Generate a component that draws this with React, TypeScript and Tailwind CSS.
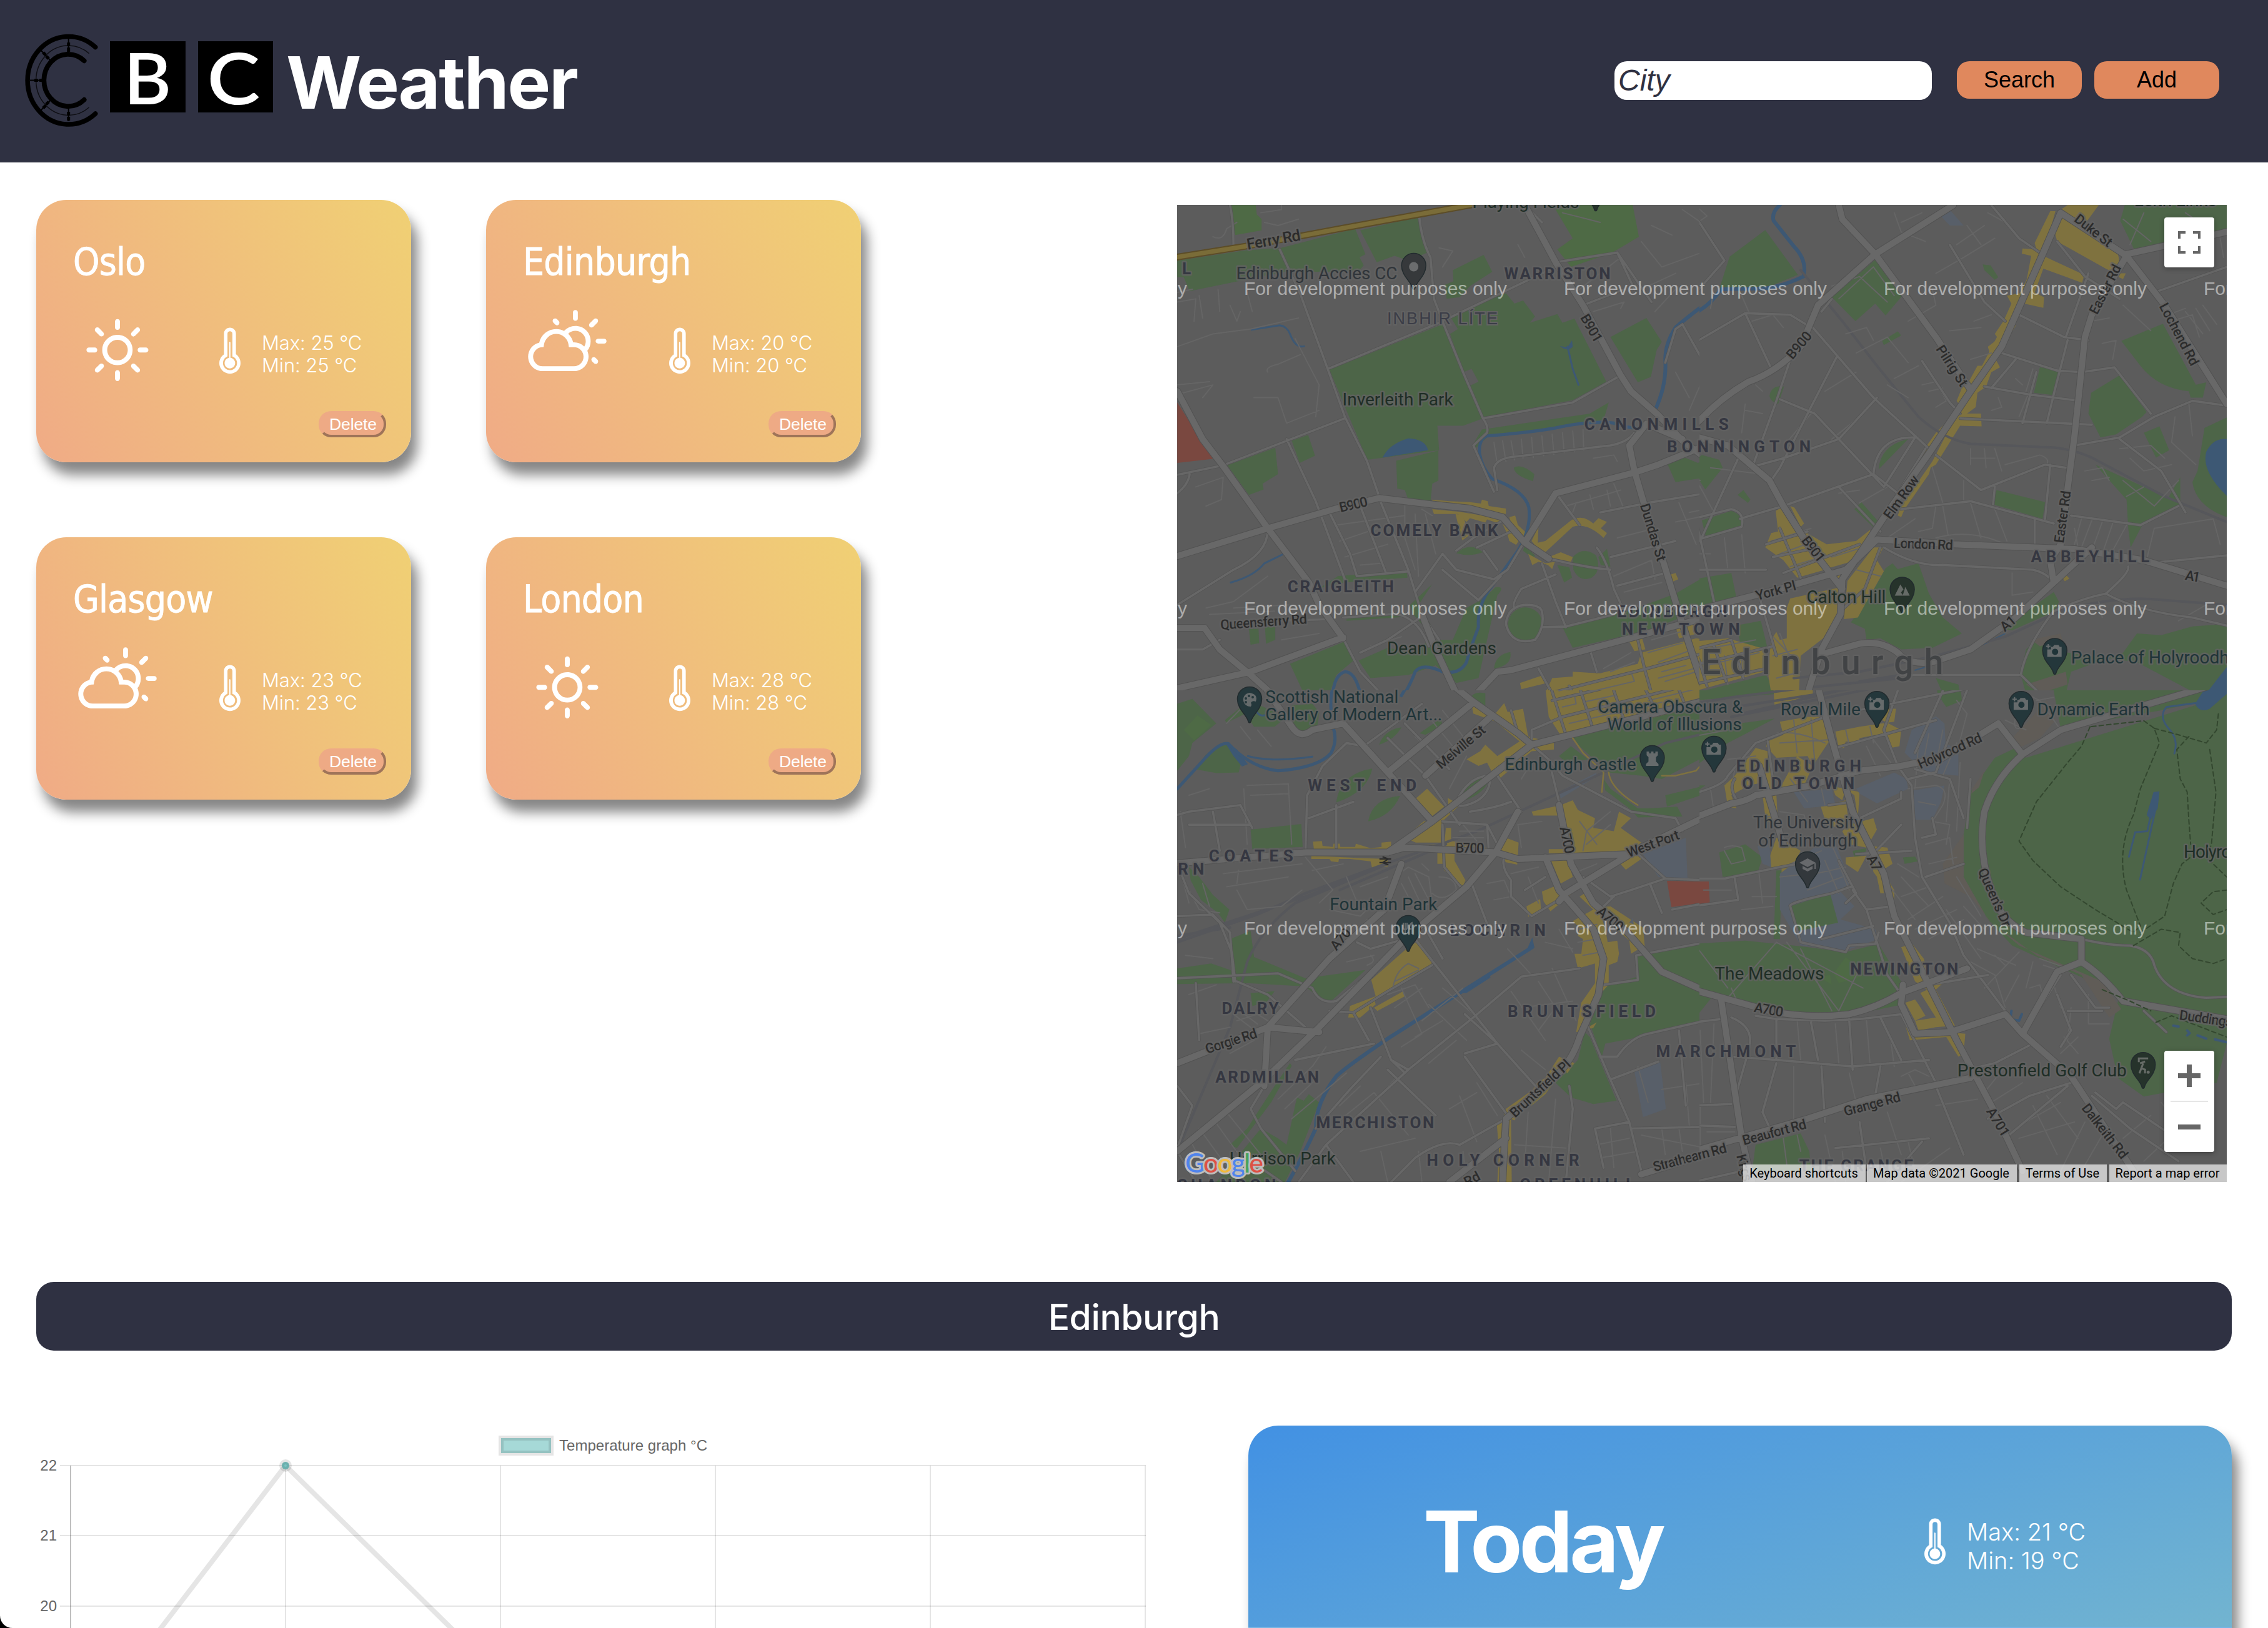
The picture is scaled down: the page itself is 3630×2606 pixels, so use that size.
import React from "react";
import { WiDaySunny, WiDayCloudy, WiThermometer } from "react-icons/wi";

type TileId = "a" | "b" | "c" | "d";

/* The map artwork is split into four tiles, each with its own local units. */
const tiles: Record<TileId, { ox: number; oy: number; sx: number; sy: number }> = {
  a: { ox: 1870, oy: 310, sx: 0.54847, sy: 0.5102 },
  b: { ox: 2710, oy: 310, sx: 0.55485, sy: 0.5102 },
  c: { ox: 1870, oy: 1090, sx: 0.54847, sy: 0.52296 },
  d: { ox: 2710, oy: 1090, sx: 0.55485, sy: 0.52296 },
};
const tileIds: TileId[] = ["a", "b", "c", "d"];
const tileTransform = (t: TileId) =>
  `translate(${tiles[t].ox} ${tiles[t].oy}) scale(${tiles[t].sx} ${tiles[t].sy})`;

const PARK = "#4d6548";
const PITCH = "#4e6a45";
const WATER = "#3d5874";
const SHOP = "#7f723f";
const CLINIC = "#7a4840";
const CAMPUS = "#585f69";
const SAND = "#605c57";

type Area = [string, string];
const areas: Record<TileId, Area[]> = {
  a: [
    [PARK, "M26 210L225 178L330 170L545 110L575 190L558 200L570 225L558 240L500 245L340 245L62 306L45 262L26 262Z"],
    [PARK, "M560 115L732 72L738 130L755 185L700 210L660 195L608 215Z"],
    [PITCH, "M180 36L255 36L258 65L272 80L272 115L195 130Z"],
    [PARK, "M830 240L920 192L945 245L880 290L850 325L812 330L808 285L832 275Z"],
    [PITCH, "M1130 50L1165 36L1355 36L1373 135L1295 185L1175 230L1135 175L1180 140Z"],
    [PARK, "M470 552L800 410L918 705L860 728L785 728L790 805L580 835Z"],
    [PARK, "M822 385L985 312L1010 345L1035 335L1070 385L1055 405L1135 378L1150 405L1185 392L1278 590L1180 648L918 702L875 605L905 590L885 550L860 560L822 440L845 425Z"],
    [PARK, "M1290 450L1395 390L1440 465L1425 490L1408 575L1370 592Z"],
    [PARK, "M915 740L1230 690L1285 655L1270 710L935 760L895 800L890 785Z"],
    [PARK, "M665 838L788 806L788 900L770 910L765 968L700 960L690 930L668 925Z"],
    [PARK, "M360 775L408 757L428 822L383 845Z"],
    [PARK, "M172 852L312 797L320 880L275 910L278 928L235 945Z"],
    [PARK, "M1008 860Q1030 845 1068 880L1064 902Q1010 885 1008 860Z"],
    [PARK, "M840 1128Q880 1090 918 1125Q880 1140 840 1128Z"],
    [PARK, "M440 1238L495 1200L695 1182L698 1205L560 1215L500 1222Z"],
    [PARK, "M1180 1140Q1210 1105 1248 1135Q1265 1185 1235 1205Q1200 1220 1182 1180Z"],
    [PARK, "M1255 1140L1280 1115L1290 1170L1262 1165Z"],
    [PARK, "M1135 1165L1170 1172L1178 1205L1155 1220Z"],
    [PARK, "M1042 1298A50 53 0 1 1 1041 1298Z"],
    [PARK, "M1150 1360L1355 1305L1480 1255L1568 1200L1568 1300L1400 1370L1180 1425Z"],
    [PARK, "M955 1235Q985 1230 960 1260L930 1400L905 1520L840 1535L780 1480L700 1510L590 1520L555 1465L640 1425L720 1440L760 1400L830 1400L870 1300L920 1270Z"],
    [PARK, "M355 1475L515 1405L540 1465L490 1510L470 1568L395 1568Z"],
    [PARK, "M950 1490Q955 1445 998 1438Q1005 1480 950 1490Z"],
    [PARK, "M235 1365L263 1365L265 1410L240 1415Z M282 1360L312 1360L312 1400L285 1412Z"],
    [PARK, "M1455 845L1500 825L1545 845L1568 835L1568 890L1480 905Z"],
    [PARK, "M705 1290L770 1225L730 1290L775 1370L770 1390L715 1320Z"],
    [PARK, "M520 1330L690 1318L690 1328L520 1340Z M1040 1105L1070 1135L1065 1145L1035 1120Z"],
    [CLINIC, "M26 655L130 832L26 845Z"],
    [WATER, "M625 828Q645 785 700 768Q750 770 758 805Z M1143 478L1165 482L1178 460L1180 480Q1165 498 1143 478Z"],
    [SHOP, "M770 960L820 965L880 968L912 972L915 960L932 965L935 980L985 988L985 1005L900 990L770 975Z"],
    [SHOP, "M770 990L850 998L975 1020L965 1035L930 1022L925 1032L880 1018L870 1030L845 1005L775 1005Z"],
    [SHOP, "M838 1005L858 1008L880 1070L858 1088L848 1050Z M975 1035L1022 1090L1015 1102L995 1090L990 1070Z M995 1015L1012 1010L1020 1040L1045 1065L1038 1080L1000 1035Z"],
    [SHOP, "M1080 1045L1060 1090L1075 1110L1100 1125L1180 1045Q1220 1030 1270 1080L1280 1065L1262 1050L1280 1030L1255 1018L1240 1035Q1210 1005 1175 1025L1100 1090L1078 1095Z"],
    [SHOP, "M1050 1130L1100 1160L1128 1155L1120 1178L1108 1165L1080 1155L1062 1165Z M1110 1140L1145 1125L1180 1140L1175 1155Z"],
    [SHOP, "M1465 1195L1480 1190L1488 1210L1470 1218Z M1340 1395L1380 1385L1392 1430L1360 1435Z"],
    [SHOP, "M1380 1440L1540 1395L1568 1400L1568 1568L1100 1568L1120 1520L1180 1515L1180 1500L1260 1505L1370 1475Z M1026 1535L1095 1510L1105 1535L1030 1555Z M1478 1350L1535 1335L1545 1380L1490 1395Z"],
  ],
  b: [
    [PARK, "M105 198L208 114L302 255L200 300L75 300Z"],
    [PARK, "M400 325L525 208L605 318L555 382L525 345L468 400Z"],
    [PARK, "M835 222L858 225L880 262L870 270L840 240Z M545 462L590 432L600 445L550 475Z"],
    [PARK, "M1245 36L1539 36L1539 110L1272 175L1232 85Z"],
    [PARK, "M1235 462L1355 408L1450 600L1480 592L1470 640L1435 640L1430 620Q1340 610 1290 540Z"],
    [PARK, "M1000 545L1055 553L1040 632L983 625Z"],
    [PARK, "M1148 625L1230 570L1308 685L1295 700L1220 755L1175 765L1140 690Z"],
    [PARK, "M1300 750L1345 730L1373 805L1335 828Z"],
    [PARK, "M1539 702L1475 735L1455 870L1440 905Q1450 980 1539 1015Z"],
    [PARK, "M220 635Q225 600 262 605L245 660Q225 655 220 635Z"],
    [PARK, "M535 865Q540 790 620 770Z M865 975L875 930L1015 968L1008 1020Z M465 990L485 968L535 1030L528 1055Z"],
    [PARK, "M1160 850L1240 890L1370 955L1405 890L1405 980L1300 1030L1262 1110L1255 1050L1250 960Z"],
    [PARK, "M0 840L25 820L75 835L85 860L35 928L0 870Z M128 945L145 930L165 960L158 970Z"],
    [PARK, "M25 1025L110 995Q150 1010 135 1050L38 1083Z M0 1210L110 1190L125 1270L0 1310Z"],
    [PARK, "M555 1175L575 1160L590 1178L650 1160L680 1255L720 1330L775 1380L690 1425L600 1430L540 1395L500 1400L495 1365L455 1345L525 1235Z"],
    [PARK, "M1040 1250L1055 1280L1045 1310L920 1370L890 1365Z"],
    [PARK, "M1539 1350L1440 1358L1350 1385L1280 1380L1240 1440L1090 1500L1075 1568L960 1568L945 1510L960 1430L985 1405L1060 1400L1080 1440L1280 1470L1450 1568L1539 1568Z"],
    [PARK, "M125 1355L195 1340L213 1420L140 1432Z M0 1568L210 1510L240 1568Z M700 1520L765 1540L770 1568L720 1568Z"],
    [WATER, "M1539 770Q1500 765 1480 810Q1465 870 1539 948Z M1539 1485L1480 1568L1539 1568Z"],
    [SHOP, "M1040 110L1060 50L1080 36L1170 36L1130 95L1225 190Q1235 220 1215 248L1190 235L1050 150Z"],
    [SHOP, "M1045 55L1030 55L985 155L990 175L950 172L948 188L975 195L955 310L905 320L918 345L895 400L870 440L880 455L850 480L855 500L835 540L820 540L795 590L775 610L760 650L770 665L755 690L700 750L655 820L665 830L780 680L880 470L940 330L1010 190Z"],
    [SHOP, "M1000 190L1128 255L1122 280L1010 235L985 310L1012 325L1010 358L955 345L925 400L930 415L900 470L890 500L870 515L885 545L860 560L845 605L820 625L815 670L790 690L830 690L832 730L770 728L700 850L685 860L680 880L610 990L600 1015L590 1010L600 980L690 840Z"],
    [SHOP, "M238 995L255 985L270 1010L320 1060L385 1100L470 1090L510 1055L515 1080L470 1150L390 1175L440 1210L430 1225L380 1180L300 1205L260 1150L208 1110L225 1065L245 1060Z"],
    [SHOP, "M280 980L292 985L320 1035L310 1045Z M445 1215L520 1110L548 1110L530 1150L550 1185L495 1290L475 1330L435 1335Z"],
    [SHOP, "M280 1270L425 1235L430 1310L400 1350L375 1395L310 1450L305 1568L225 1568L215 1500L225 1400L240 1375L250 1400L270 1395L270 1300Z"],
    [SHOP, "M0 1405L100 1395L210 1430L205 1500L0 1562Z M1225 250L1248 250L1240 268L1228 262Z M1065 1205L1075 1195L1085 1208L1072 1216Z"],
    [SAND, "M975 1400L1060 1380L1065 1400L1000 1420Z M960 1540L1075 1500L1080 1540L1000 1568Z"],
    [CAMPUS, "M705 60L740 50L780 100L740 100Z"],
  ],
  c: [
    [PARK, "M26 70L70 55L140 130L70 190L60 230L26 275Z"],
    [PITCH, "M45 150L85 105L125 135L75 182Z"],
    [PARK, "M110 225L165 190L215 240L205 280L140 282L78 270Z M165 120L235 60L300 90L345 110L310 140L250 140L225 100L170 128Z"],
    [PARK, "M360 75L420 70L440 95L435 140L380 160L365 130Z M350 0L470 0L470 22L400 25Z"],
    [PARK, "M733 160L795 115L800 135L750 165Z M615 195Q630 150 680 142Q660 180 615 195Z M880 55Q890 30 925 38L925 78Z"],
    [PARK, "M240 455L388 438L392 508L245 515Z M490 372Q500 285 595 268Q580 340 490 372Z M583 430Q595 360 676 352Q650 415 583 430Z"],
    [PARK, "M845 372Q860 295 940 285Q930 350 845 372Z"],
    [PARK, "M1180 170L1568 60L1568 230L1440 300L1380 290L1285 280L1200 200Z M1140 230L1175 200L1225 240L1160 250Z"],
    [PARK, "M1270 300L1290 330L1370 390L1400 390L1485 385L1500 415L1370 418L1345 390L1275 335Z M1450 350L1568 320L1568 345L1455 385Z"],
    [PARK, "M60 570L90 600L130 655L178 700L165 740L145 710L95 670L65 610Z"],
    [PARK, "M180 790L240 765L250 845L400 910L575 885L470 985L440 970L400 935L230 925L26 928L26 880L125 865L195 890Z"],
    [PARK, "M240 955L310 950L285 985L245 995Z"],
    [PARK, "M1370 840L1568 800L1568 1040L1350 1095L1275 1110L1265 1150L1230 1050L1275 935L1370 905Z"],
    [PARK, "M1215 1075L1230 1090L1308 1285L1240 1295L1175 1275L1130 1230L1195 1160Z"],
    [PARK, "M375 1275L395 1285L410 1265L440 1290L385 1440L340 1534L140 1534L270 1370L320 1400L345 1420Z M180 1420L230 1370L310 1240L355 1170L360 1178L300 1290L200 1430Z"],
    [WATER, "M165 188L200 210L232 255L215 262L190 230Z M850 955L935 895L940 908L870 955Z M1062 785L1068 815L1045 825Z"],
    [SHOP, "M1026 10L1100 0L1568 0L1568 70L1425 110L1150 175L1110 110L1100 20L1035 25Z"],
    [SHOP, "M885 75L950 105L980 68L990 95L1035 85L1050 170L1125 190L1125 210L1060 215L965 300L955 270L945 280L930 250L905 260L870 240L910 215L925 195L960 230L1025 185L955 125L890 100Z"],
    [SHOP, "M722 360L755 330L805 385L765 418Z M815 358L850 380L800 430L795 455L795 495L722 495L690 480L745 430L790 425L820 400Z"],
    [SHOP, "M422 492L448 490L450 505L480 508L482 498L500 498L502 508L545 508L547 498L590 512L622 508L622 495L650 492L650 520L425 518Z M417 535L560 542L640 545L640 568L595 575L590 552L530 545L498 545L496 555L475 552L470 545L417 545Z"],
    [SHOP, "M810 450L825 450L825 490L860 495L945 515L940 525L835 522L835 550L867 610L860 628L805 580L803 560L785 560L785 518L700 515L705 505L805 500Z"],
    [SHOP, "M960 520L985 480L1022 495L1020 535L1018 562L985 555Z M1060 400L1145 380L1180 365L1195 395L1245 420L1240 450L1300 460L1315 400L1350 420L1320 450L1380 495L1340 525L1110 528L1110 515L1175 515L1145 412L1065 412Z"],
    [SHOP, "M1115 545L1165 545L1180 600L1145 620Z M1090 645L1135 625L1140 650L1215 610L1235 602L1115 705L1095 675Z M1045 690L1085 668L1088 705L1050 722Z M1315 555L1375 530L1380 545L1335 578Z"],
    [SHOP, "M1200 660L1215 650L1245 695L1290 690L1385 755L1390 810L1350 835L1345 795L1262 715L1275 760L1282 800L1310 795L1315 835L1310 860L1285 870L1285 930L1245 975L1225 1060L1250 1045L1240 1062L1190 1075L1205 985L1245 925L1245 865L1195 880L1185 835L1205 835L1210 790L1195 780L1200 755L1180 735L1240 700Z"],
    [SHOP, "M592 915L700 815L730 795L775 858L735 895L600 970L605 990L560 1030L525 1030L530 995L605 965Z M600 1000L685 950L690 965L610 1010Z"],
    [SHOP, "M1140 1150L1185 1170L1165 1200L1150 1195L1100 1265L1060 1300L1050 1290L1010 1345L1000 1340L1002 1534L960 1534L965 1440L958 1350L975 1345L985 1310L1065 1250L1070 1235L1100 1215Z"],
    [CLINIC, "M1455 612L1568 614L1568 682L1520 685L1468 692Z"],
    [CAMPUS, "M1385 530L1510 480L1515 605L1430 600Z M1360 1195L1435 1165L1452 1310L1385 1335Z M1140 340L1250 280L1245 295L1145 360Z M1345 740L1355 725L1358 745Z"],
  ],
  d: [
    [PARK, "M0 30L225 0L235 40L0 60Z M0 150L235 115L100 190L0 265Z M700 0L770 5L775 60L730 80L705 40Z"],
    [PARK, "M1060 0L1539 0L1539 100L1480 60L1350 90L1060 145L1040 30Z"],
    [PARK, "M870 235L930 205L960 235L1539 45L1539 1110L1510 1230L1300 1272L1225 1215L1200 1095L1230 960L920 810L850 730L780 600L780 470L800 340Z"],
    [PARK, "M0 320L35 320L0 345Z M75 525L150 500L200 540L185 590L85 600Z M605 540L640 538L648 552L610 560Z M240 580L255 580L250 790L232 790Z M460 520L500 512L495 530L465 540Z"],
    [PARK, "M0 805L150 795L310 812L440 830L535 805L605 930L605 990L400 1035L290 1030L60 960L0 1040Z"],
    [PITCH, "M405 895L440 845L470 870L485 905L420 925Z M360 905L395 900L400 930Z"],
    [PARK, "M180 1420L310 1385L335 1440L340 1500L170 1500Z"],
    [SAND, "M930 210L1000 175L1045 120L1020 60L960 130L915 180Z M780 470L720 560L725 620L800 660L860 740L990 840L1120 900L1200 1030L1235 1005L1180 920L940 810L850 730L780 600Z M805 330L840 275L825 325L802 345Z"],
    [WATER, "M1539 0L1490 0L1448 70Q1460 100 1490 85L1539 40Z M1328 340L1345 338L1340 390L1320 425L1308 410Z"],
    [CLINIC, "M0 614L45 614L48 682L0 684Z"],
    [SHOP, "M215 185L260 165L250 125L330 110L380 110L395 180L345 260L330 230L240 235L210 200Z M410 155L480 140L580 125L585 85L560 85L545 120L600 150L595 200L570 205L550 160L480 175L478 190L440 185L435 205L420 205Z"],
    [SHOP, "M0 0L110 0L90 15L0 25Z M230 0L345 0L345 40L330 45L235 80Z M90 320L120 290L180 205L215 215L215 280L250 300L160 320L110 350L125 390L100 385Z M300 230L345 260L320 320L250 330L260 310Z"],
    [SHOP, "M225 240L240 350L245 440L210 430L200 350L190 240Z M368 385L440 365L450 440L420 450L385 440Z M400 320L415 325L480 340L475 420L465 350L440 330L430 365L410 350Z"],
    [SHOP, "M250 480L310 520L290 560L225 575L220 540L240 480Z M255 575L320 560L310 590L255 590Z M430 460L450 440L520 420L530 455L500 510L450 500Z M440 540L500 535L475 585L440 560Z M505 505L560 510L575 560L545 580L580 640L580 670L520 585Z"],
    [SHOP, "M530 600L545 610L550 650L540 650Z M600 815L632 805L665 850L685 925L720 925L700 945L755 1055L700 1060L650 1070L640 1040L700 1030L655 955L675 945L640 920Z M612 985L640 975L650 990L670 1025L640 1040Z M608 1040L640 1090L735 1075L785 1080L780 1140L765 1150L730 1090L625 1100Z"],
    [CAMPUS, "M610 220L630 150L700 108L725 130L728 190L765 215L765 290L670 280Z M470 330L580 280L615 300L620 330L530 375L480 345Z M635 335L725 320L715 370L690 425L640 425Z"],
    [CAMPUS, "M250 590L400 470L455 620L420 640L465 690L425 730L525 760L535 790L440 825L310 810L250 700Z M185 505L220 500L225 570L200 560Z M290 340L400 330L410 380L320 390Z"],
    [PARK, "M280 690L395 650L418 740L305 765Z"],
    [SHOP, "M240 500L300 525L295 555L250 570Z"],
  ],
};

const rivers: Record<TileId, [number, string][]> = {
  a: [
    [3, "M243 427L325 413Q345 415 355 440Q370 485 396 479"],
    [6, "M1568 345Q1500 400 1480 420Q1450 470 1450 520Q1455 600 1420 680"],
    [5, "M1390 735Q1350 740 1300 720Q1240 710 1130 735Q1050 750 930 760Q905 770 908 815Q915 860 945 895Q1040 930 1052 985Q1060 1050 1020 1120Q960 1210 935 1245Q900 1300 905 1360Q880 1430 870 1470Q850 1510 800 1500Q740 1470 720 1500Q710 1530 690 1568"],
    [5, "M560 1568Q545 1500 515 1500Q485 1510 480 1568"],
    [3, "M1165 480L1180 550L1197 600"],
    [3, "M182 1220Q250 1200 280 1160L337 1130"],
  ],
  b: [
    [6, "M250 36Q225 60 232 85L290 165Q330 210 318 260Q240 300 180 298L80 300Q50 350 0 378"],
    [2, "M640 1495Q760 1460 900 1380"],
  ],
  c: [
    [5, "M26 330L100 245Q150 185 175 192Q240 265 320 275Q440 265 475 220Q495 180 480 140"],
    [3, "M232 230Q300 250 420 232"],
    [5, "M490 0Q470 30 475 90M705 0L680 45M555 0L562 22"],
    [6, "M1062 815L850 955L640 1095Q520 1180 490 1210Q430 1290 430 1370Q400 1440 350 1534"],
    [3, "M255 90Q265 110 280 105"],
  ],
  d: [
    [3, "M1448 68L1365 80Q1340 110 1375 150Q1400 180 1388 222"],
    [3, "M1318 420L1310 460L1275 463L1257 538M1332 400L1289 608"],
    [4, "M918 1010L915 1035L940 1040L948 1020M1385 1055L1400 1058M1425 1070L1432 1078L1425 1085M1455 1085L1480 1095M1505 1097L1539 1106"],
  ],
};

const major: Record<TileId, string> = {
  a: "M1040 36L1130 215L1210 350L1320 570L1350 620L1430 695L1500 775L1568 830M26 1137L290 1050L500 985L615 955L770 975L880 988L975 1015L1040 1095L1110 1145M26 620L100 770L160 855L290 1050L410 1220L440 1290L510 1395M1040 1095L1130 940L1360 875L1430 850L1568 790M1500 770L1395 722L1345 790L1360 870L1390 980L1440 1140L1500 1350L1540 1480L1568 1568M26 1362L105 1362M105 1362L150 1430L240 1510L300 1568M26 1552L240 1500L510 1392M740 1320L780 1430L840 1568M1000 1495L1380 1385L1568 1330M1000 1495L960 1500L900 1568",
  b: "M420 36L430 80L525 190L700 450L800 615M525 190L360 350L310 480Q240 560 160 590Q80 640 20 710L0 730M525 190L750 36M1060 60L1010 185L890 480L800 620L680 815L560 1000L480 1130L430 1210L425 1320L370 1430L330 1568M1060 60L1250 195L1150 380L1130 450L1100 760L1060 1090M1250 195L1360 350L1539 660M1250 190L1539 120M0 760L100 790L220 900L260 980L330 1100L430 1240M0 1310L250 1240L440 1180L530 1085L750 1100L1100 1115L1300 1150L1539 1230M1060 1100L1030 1150L1040 1220L930 1330L800 1430L690 1470Q620 1480 590 1440Q540 1400 480 1412L370 1445M1040 1220L1150 1110",
  c: "M26 15L60 0M270 0L360 140Q385 180 420 150L510 130L640 280L770 430M640 280L885 70M815 0L885 60L1020 160L1060 195M750 290L940 110M770 430L640 525L400 525M770 430L1060 195L1568 60M0 560L400 525M640 525L690 510L955 525L1020 545L1340 530L1568 415M1100 540L1140 640L1240 760L1270 850L1255 960L1200 1090Q1180 1160 1130 1210L985 1340L975 1534M1020 400L955 525L870 630L690 790L440 1060L270 1230L26 1440M1140 380L1175 560L1240 680L1340 770L1440 890L1568 950M1340 535L1160 650L1140 675M680 560L630 700L470 850L290 1060L280 1240M26 1170L290 1060L440 1075M820 1534L985 1400M1380 1510L1568 1450",
  d: "M0 420L110 375Q150 370 180 350L340 320L480 275L590 262L720 235L880 130L950 225Q870 300 840 400Q820 520 860 640Q880 730 960 770L1120 790L1120 860L1050 890L950 1080L900 1020L740 1075L640 1080L600 990L605 930M950 225L1060 150L1539 0M355 0L400 180L460 400L550 590L580 720L680 930L760 1100L870 1320L950 1500M0 945L220 1010Q330 1035 450 1020Q530 1000 600 955L790 880M1120 860Q1180 900 1240 980L1539 1035M950 1080L1090 1210L1270 1500M0 1440L330 1340L500 1280L800 1215M80 970L140 1400L170 1534M190 260L260 500",
};

const minor: Record<TileId, string> = {
  a: "M325 175L385 315L465 550L515 700L580 840L615 950M732 72Q740 150 765 200L775 330L800 400L860 560L918 705Q935 730 930 750L890 790L950 935M465 550L780 410L1120 235M918 705L1180 655L1320 570M180 36Q190 90 190 160M345 770L430 965L515 1210M26 882L160 852L515 705M615 955L700 1180L740 1320L790 1400M470 1000L530 1130L550 1200L700 1185M560 980L635 1190M510 1395L560 1500L620 1568M1135 945L1200 1040M1110 1145Q1200 1170 1290 1180M1040 1090L990 1180L950 1210L840 1180L800 1130L720 1250M800 1180L905 1275L970 1200M1090 1160L1130 1280L1160 1360M1130 1195L1030 1240Q1000 1290 1010 1300M1095 1360L1160 1358L1300 1320M1250 1110Q1280 1150 1300 1240L1330 1310M1090 1310Q1100 1360 1070 1400Q1000 1420 985 1350Q990 1295 1042 1290Q1085 1290 1090 1310M26 1290L190 1180Q290 1130 290 1055M26 940Q60 910 62 880M510 1330L640 1320Q720 1310 760 1420M320 1340L470 1335L510 1395M960 930L950 860Q960 830 1010 825L1290 790Q1340 780 1360 750M1290 1140L1480 1090M1310 1230L1450 1190M1260 1000L1400 970L1568 940M1450 530L1480 425L1500 410M1500 410L1568 540M1310 185L1410 340M1210 350L1330 300M1090 90L1040 36M1130 215L1310 185L1360 300M900 1110L1000 1060M840 1120L890 1080L985 1020M960 1180L920 1120M1080 1490L1120 1568M1230 1430L1250 1500M26 1430L100 1430L150 1400M560 1440L640 1400L735 1330M1110 1568L1390 1492L1568 1440M1370 1400L1390 1492L1410 1568M1180 1568L1170 1545",
  b: "M0 60L90 210L0 320M860 36L940 140L1000 185M1050 150L1130 260L1230 330M940 380L1070 450L1140 460M890 500L1050 555L1120 560L1215 545L1320 690M840 605L970 630L1100 648M770 705L1150 725M700 820L830 930L1015 850L1075 860M0 470L150 375L280 380L340 420M345 420L520 640L680 800M150 375L230 560M415 510L250 860L225 900M250 645L350 690L550 920L640 765Q530 760 520 880L260 980M530 640L420 770L260 830L160 860M280 520L240 650L170 860M130 830L20 1090M520 880L590 940L670 800M600 990L800 965L1040 1035M870 920L865 975M420 920L540 1060M1030 850L1015 1020M1100 790L1230 765L1330 700L1440 650L1539 665M1090 1010L1290 1040L1400 980M1080 460L1040 630L1020 720M1140 250L1075 450M930 520L860 610M950 720L990 560M985 1020L985 1110M550 1110Q640 1170 720 1165L980 1180Q1020 1190 1040 1220M0 1090L30 1080L140 1045Q150 1000 110 990L0 1020M260 980L135 1020M210 1100L330 1060M230 1140L360 1110M260 1190L480 1100M310 1205L250 1050M1255 1170Q1260 1190 1190 1255Q1120 1270 1040 1310Q960 1420 945 1510L1000 1568M1190 1255Q1280 1310 1440 1330L1539 1355M1310 1160L1539 1135M1330 310L1539 230M660 525L740 655L770 690M740 160L840 340L900 400M400 330L370 370M1230 770L1350 870L1420 1000M600 1510L940 1510M0 980L60 1280M0 1180L210 1180M425 1310L495 1240L540 1110M190 1260L240 1450M0 1430L110 1400M0 1480L230 1420M0 1540L210 1490M60 1420L95 1530M110 1400L145 1520M10 1440L40 1545",
  c: "M400 525L405 350L450 260L520 190L570 200M26 410L60 400L210 380M210 380L245 450M130 400L150 520M60 440L240 440M490 380L490 510M410 420L540 370M640 175L750 290L850 440M570 200L740 70M690 130L820 270M800 430L930 440L960 500M800 440L805 570L860 640M930 440L935 520M880 400Q950 390 1000 370M1060 195L1110 240L1140 370M960 290L1030 400M1110 240L1150 290L1350 400L1480 420L1500 460M885 620L940 770M980 540Q970 570 1000 610L1000 660L1060 720L1140 670M870 380Q830 390 845 360Q880 290 940 290Q940 360 870 380M1210 600L1290 660L1350 640L1450 605L1568 610M1350 510L1450 605M1405 620L1440 710M1250 710L1300 660M26 910L320 895L420 940Q440 990 490 980L650 840M80 925L90 1100M195 920L185 830L150 740M26 720L130 715L180 770L190 920M200 920L290 960L400 1060M720 790L960 1110L1080 1250M770 870L640 950L540 1015L470 1010M540 1015L585 1100M590 1000L650 1160L690 1200M740 740L800 850M690 790L590 820L550 800M890 1030L700 1190L460 1420L380 1534M1270 930L1370 915L1365 840L1568 800M960 1110L865 1020M1200 880L1030 905L890 1030M865 1150L990 1330M960 1110L865 1140M1260 1150L1310 1150Q1350 1090 1400 1080L1568 1040M1225 1060L1290 1220L1345 1350L1380 1500M1290 1220L1430 1165M1350 1370L1568 1365M1245 1370L1345 1350M1245 1370L1270 1490M1170 1240L1180 1310L1160 1534M985 1340L850 1420Q800 1400 720 1460L650 1534M620 1150L530 1250L430 1370M640 1190L780 1330M460 1420L540 1534M700 1190L650 1160M270 1370L240 1310L280 1240M270 1370L370 1500M200 1440L330 1534M26 1440L80 1534M26 1240L70 1300L26 1430M370 1160L600 1110M26 560L60 650L160 750M1100 600L1040 640M1470 700L1568 680M1490 1070L1510 1300M1110 0L1160 165M1060 195L1060 150L1150 110L1568 0M1200 20L1240 150M1290 0L1330 120M1380 0L1430 105M1480 0L1510 80M1120 60L1380 -5M1020 160L1000 90",
  d: "M0 345Q90 320 100 290L180 190L380 110L900 0M410 205L700 120M600 0L550 150L590 260L630 320L640 480L660 600L740 740L780 840L900 1010M620 300L700 280L800 0M480 420L600 360L600 340M470 530L630 520M500 550L600 440M460 640L500 700L560 900L600 960M420 550L470 650L440 680M0 605L90 605L250 570L300 560M120 605L130 670L0 690M500 700L570 690M280 690Q270 680 400 650L455 630M280 690L310 800L440 830L450 810L525 805L535 770M370 790L520 750M850 900L680 930M700 1230L600 1020M600 1020L480 1035L380 1040L240 1035L180 1025M240 1035L240 1160M340 1045L360 1160M450 1035L460 1190M540 1030L600 1160M110 1030Q180 1060 160 1130L120 1280M110 1150L240 1160L460 1180L680 1160M0 1360L120 1365M0 1045L80 1035M370 1180L380 1350M240 1170L200 1320L230 1390M540 1180L520 1300M700 1240L780 1450M850 1340L970 1270L1090 1230M900 1400L1080 1240M1150 1270L1260 1370L1400 1470M1160 1260L1220 1310L1240 1290L1380 1390M980 1110L870 1170L790 1190M1120 790Q1200 810 1260 810Q1320 820 1330 870Q1360 960 1480 970L1539 967M1300 1010L1365 1075M1060 900L1000 1000M1090 900L1160 1000L1200 1000M1080 1010L1180 1010M1050 960L1090 1070L1060 1120M800 300L790 450M720 30L640 220M660 480L700 470L690 420M640 270L740 300L780 420M670 600L780 560M0 1300L110 1295M560 1534L660 1410M410 1430L680 1400M480 1350L500 1500M0 1534L140 1500M215 185L230 300M120 300Q100 330 130 370M390 380L460 370",
};

const lanes: Record<TileId, string> = {
  a: "M26 310L70 300M26 340L80 330L75 400M90 320L100 390M145 300L150 370M180 350L200 400L210 370M230 310L245 370M26 480L130 440L240 425L380 390M290 560Q280 545 320 535L385 505M26 630L130 600L100 640M26 600L120 590M370 455L440 600L430 700M250 640L320 640L345 720L440 680M130 135Q160 150 170 110L200 90M270 60L330 50L330 36M280 90L320 100L380 80M1380 150L1440 230L1568 180M1410 100L1470 130M1500 50L1568 100M1240 370L1330 340L1320 360M1380 300L1480 250M1420 370L1480 300M950 780L960 850M975 775L985 840M1000 775L1010 835M1030 770L1035 830M1060 765L1065 828M1090 760L1095 822M1120 755L1125 818M1150 750L1155 812M1180 745L1185 810M1210 740L1212 805M1240 830L1300 820L1310 840M1160 980L1320 930M1180 1000L1190 970M1240 990L1230 945M1290 980L1280 930M1300 910L1330 990M720 1005L730 1200M750 1005L780 1130M690 980L690 1080L720 1180M490 1040L690 1010M500 1090L610 1050M515 1140L640 1100M560 1165L620 1160M80 920L160 890L155 960L110 980M190 1300L350 1290M110 1300L190 1280L290 1200M120 1320L310 1310M330 1400L440 1380M590 1420L680 1390M740 990L770 1010M1300 1200L1410 1150L1420 1210M1330 1250L1440 1220M1310 1080L1420 1050M1490 970L1540 1100M1520 1000L1568 990M1480 1030L1568 1010M1410 1400L1510 1370M1400 1440L1500 1410M1430 1470L1530 1430L1540 1500L1450 1530M1270 1490L1350 1440M1290 1500L1360 1470M1520 680L1568 560M1480 560L1520 640M1150 60L1260 90M790 170L830 180L800 230M1020 160L1040 200M1200 300L1320 200M1200 1540L1350 1500L1360 1530L1210 1568M1440 1500L1510 1480M1430 1520L1568 1480",
  b: "M0 100L40 70L10 40M60 300L50 360M140 320L160 370M170 400L230 380L260 420M180 600L200 620M150 680L200 690M400 290L480 260L560 340M420 330L520 230L580 320M440 440L500 420L520 460M470 500L560 450L620 530M580 580L650 540M560 600L620 640M380 620L470 560M660 600L700 590L730 650L700 670M680 620L720 610M620 400L700 350L690 300M580 60L600 120L670 150M600 90L660 60M760 160L840 100M780 200L870 140M700 250L780 200M810 400L860 380M790 100L830 160M850 60L900 90M740 430L830 420M800 520L860 500M960 620L980 550M940 700L970 620M880 640L890 670L860 680M930 580L950 600M1180 470L1220 460L1210 520M1150 400L1200 390M1240 350L1320 430M1370 380L1420 360M1380 400L1440 380L1460 450M1420 370L1470 440M1450 360L1490 430M1470 350L1510 410M800 830L870 830M800 800L800 850M840 800L845 860M870 800L890 870M900 850L1000 820Q1030 830 1020 850M690 860L720 970M780 900L780 965M700 980L690 1050L650 1060M720 980L735 1070M800 970L830 1080M870 990L905 1090M700 1080Q800 1050 900 1100M1100 1050L1110 1110M1120 1020L1100 1100M1150 1025L1120 1110M1180 1030L1150 1120M1210 1035L1180 1130M1250 1040L1200 1140M1130 870L1180 860L1200 900M1150 900L1200 890M1230 800L1320 790L1360 830M1260 830L1300 870L1380 850M1240 900L1330 980L1400 900M1250 950L1300 920M1330 1050L1500 1020L1520 1100M1310 1140L1330 1050M1390 700L1380 780L1450 850M1430 660L1440 760M920 1190L920 1260L980 1250M1180 1330L1170 1280M1080 1290L1180 1290M1400 1340L1480 1290M1490 130L1500 220M1520 140L1530 200M1470 170L1480 230M0 890L20 900M50 860L200 880M10 900L60 1000M150 660L140 750M340 690L270 780M480 700L400 770M420 940L480 930M480 970L560 920M560 1080L640 1020M0 1130L50 1130M90 1080L100 1180M140 1070L150 1190M240 1520L310 1500M30 1430L180 1400M40 1480L190 1440M140 1520L140 1440M90 1450L100 1540M1240 80L1320 150M1300 60L1260 160M1420 60L1500 120M225 1090L340 1050M250 1130L350 1090M280 1170L370 1140M400 1140L490 1110M470 1180L540 1200M230 1390L300 1470M250 1380L280 1460M230 1450L300 1430",
  c: "M35 400L50 510M60 350L120 330M220 330L230 500M230 320L350 315L360 500M240 350L350 345M150 540L340 520M60 550L150 545M160 590L390 560M170 630L350 600M200 640L230 700L330 690L390 640M200 620L205 580M400 540L480 640L440 680M420 580L510 560M520 600L560 700L620 690M660 600L700 570L760 600L770 680L710 700M680 620L720 700M700 600L740 690M720 590L760 670M560 630L640 600M740 560L760 580M790 600Q840 600 840 640Q800 680 770 650M860 440L900 490M850 460L920 460M830 480L920 480M1060 250L1030 300M870 230L820 330M760 110L830 200M720 170L790 240M800 90L860 170M930 620L980 610L1000 660L950 670M1000 590L1080 570M1050 600L1080 680M1090 430L1020 440L1030 510M1180 590L1250 560M1210 520L1220 460L1290 400M1250 500L1200 430M1220 500L1290 440M470 700L560 720L590 690M510 820L580 730M520 860L600 840M590 840Q610 860 580 870M50 620L90 700L150 710M40 600L60 680M100 620L120 690M50 840L130 850M60 960L140 930M90 1080L180 1060M190 1020L240 1060M200 1040L260 1020L320 1060M210 1010L260 1050M180 1140L250 1100M640 960L720 930L760 1000M660 1000L740 940M680 940L740 1080L680 1120M800 940L890 1020M760 990L870 1100M840 1100L760 1170M740 1040L860 940M720 1090L800 1040M1080 920L1130 1000L1080 1070M1000 950L1100 1100M1030 1000L1180 980M1120 880L1190 1040M990 820L1060 900M1100 800L1180 820M1140 760L1180 830M1100 1190L1030 1130M850 1270L900 1410M900 1230L960 1330M820 1310L900 1260M470 1370L600 1260L700 1390M500 1300L560 1240M610 1280L660 1220M560 1440L720 1400M620 1440L640 1534M730 1440L740 1534M860 1440L870 1534M1050 1320L1040 1480M1130 1280L1110 1534M1010 1420L1160 1430M1250 1420L1345 1400M1260 1460L1370 1440M1290 1370L1300 1490M1370 1180L1400 1290M1440 1250L1568 1230M1510 1230L1520 1360M1380 1390L1568 1430M1440 1370L1450 1450M1490 1370L1500 1440M60 1400L130 1534M90 1370L180 1500M130 1340L240 1500M170 1320L270 1450M320 1280L420 1180L460 1120M340 1310L430 1220M360 1340L520 1200M170 130L235 60M210 140L240 180M260 150L300 200M1140 30L1280 -5M1150 80L1190 70L1185 45M1210 65L1300 45M1220 90L1400 45M1170 130L1440 65M1310 20L1420 -5M1400 60L1560 20M1450 80L1568 50M655 945Q660 890 700 865L730 880M660 920L730 885M1200 760L1250 745M1195 800L1250 790M1210 840L1260 830",
  d: "M0 170L100 150M100 240L180 230M120 270L110 330M50 330L60 400M190 420L240 410M250 400L320 410L330 450M370 330L380 380M280 300L330 370M500 200L540 290M520 180L570 250M620 330L700 320Q740 330 720 380L690 430M650 190L640 330M680 160L660 270M720 150L700 260M760 190L720 290M770 250L760 460M740 300L730 430M690 430L740 440L730 500M650 370L700 380M670 500L740 480L750 560M680 560L760 540M600 600L680 690M560 620L640 730M590 560L650 600M600 660L680 630M620 730L720 660M640 760L760 700M680 790L780 730M730 700L830 850M760 600L830 720M780 690L840 760M800 860L870 900L900 1000M820 820L930 870M840 940L940 830M900 980L940 900M870 840L900 870M980 860L960 940M1000 850L1080 880M1010 870L1070 890M970 940L1000 930L1010 970L980 1020M1040 930L1060 1000M1090 1000L1080 1100M1140 960L1140 1050L1200 1050M1070 1090L1110 1140M1060 1140L1110 1090M90 510Q110 500 140 510L150 550L110 560L90 520M280 560L370 520M310 600L440 570M330 640L430 600M380 550L420 650M420 560L450 640M250 600L340 590M390 480L450 620M400 470L370 500M190 590L200 680M170 660L240 660M140 700L230 690M30 640L110 640M240 800L490 940M310 820L400 1010M240 800L100 970M270 800L420 1010M110 940L130 990M480 880L420 1010M0 800L100 940M20 1070L30 1290M60 1050L50 1290M300 1040L310 1160M410 1050L420 1170M500 1040L510 1170M570 1100L580 1180M290 1180L290 1340M450 1200L470 1290M600 1210L640 1190L680 1210M620 1200L640 1240M20 1300L20 1430M40 1380L120 1380M260 1400L270 1480M300 1390L310 1440M380 1390L410 1534M560 1320L600 1450M430 1440L440 1534M540 1430L560 1534M620 1410L640 1500M740 1430L600 1534M700 1300L820 1280M840 1260L900 1180M860 1290L950 1230M980 1300L1050 1450M1020 1270L1110 1400M960 1350L1060 1290M940 1400L1100 1350M1130 1350L1060 1500M1180 1390L1120 1500M1320 1330L1240 1400M1380 1390L1300 1470M1350 1290L1420 1390M900 120L960 150M930 110Q920 160 950 140M990 60L1040 50M960 40L1000 60L1060 150M760 60L790 100L770 180M240 160Q300 150 380 190M250 190L390 180M290 120L300 220M340 115L350 240M440 150L450 195M510 140L520 190",
};

const rails: Record<TileId, string> = {
  a: "",
  b: "M310 240L430 400L530 540L650 700Q720 770 800 785L1000 795Q1100 795 1170 840L1360 950L1539 1030M290 1520L480 1500L700 1450L900 1390L1060 1310Q1200 1265 1320 1272L1539 1290M480 1530L600 1510M330 1550L600 1520",
  c: "M26 800L260 715L400 650L620 565L900 460L1250 290L1450 190L1568 160M26 790L400 660L640 560M26 1440L180 1060L230 860Q270 760 370 680L640 560M26 780L180 755M500 640L810 500",
  d: "M0 70L110 50L480 0M110 110L530 20M140 100L500 10M120 80L600 0",
};

const trails =
  "M1145 140L1120 200L1080 250L990 370L940 490L980 550L1060 630L1160 700L1270 770L1290 750L1250 640Q1220 520 1270 410L1290 330L1345 190L1330 145L1300 122L1145 140M1330 145L1400 165L1480 190L1510 150L1515 100M1430 170L1395 210L1405 300L1425 340L1430 430L1435 500M1490 210L1508 340L1495 500L1480 540L1539 600M1290 770L1360 720L1385 620L1410 560L1440 535M1539 640L1500 645L1465 680L1500 715L1539 700M1270 810L1350 760L1405 770L1400 810L1440 850L1500 865L1539 850M1180 945L1260 980L1320 1010M1335 1045L1380 1025L1539 1090";

interface LabelProps {
  t: TileId;
  x: number;
  y: number;
  w: number;
  size?: number;
  kind?: "area" | "poi" | "park" | "road" | "uni" | "city";
  angle?: number;
  children: string;
}

const labelInk = {
  area: "#353741",
  poi: "#1f3438",
  park: "#1f2e26",
  road: "#2c2c2c",
  uni: "#30353a",
  city: "#414345",
};

/* Straight labels start at (x, y); rotated ones are centred on it. w is in pixels on screen. */
function Label({ t, x, y, w, size = 26, kind = "area", angle, children }: LabelProps) {
  const k = tiles[t];
  const px = k.ox + x * k.sx;
  const py = k.oy + y * k.sy;
  const rotated = angle !== undefined;
  return (
    <text
      x={rotated ? px - w / 2 : px}
      y={rotated ? py + size * 0.35 : py}
      transform={rotated ? `rotate(${angle} ${px} ${py})` : undefined}
      textLength={w}
      fontSize={size}
      fontWeight={kind === "area" ? 700 : kind === "road" || kind === "city" ? 500 : 400}
      fill={labelInk[kind]}
      stroke="#626262"
      strokeWidth={5}
      strokeLinejoin="round"
      strokeOpacity={0.8}
      paintOrder="stroke"
    >
      {children}
    </text>
  );
}

function Pin({ t, x, y, fill, children }: { t: TileId; x: number; y: number; fill: string; children?: React.ReactNode }) {
  const k = tiles[t];
  return (
    <g transform={`translate(${k.ox + x * k.sx} ${k.oy + y * k.sy})`}>
      <path
        d="M0 0C-1 0 -2 -1 -2.4 -3C-5 -13 -19.5 -22 -19.5 -38A19.5 19.5 0 0 1 19.5 -38C19.5 -22 5 -13 2.4 -3C2 -1 1 0 0 0Z"
        fill={fill}
        stroke="#222b2e"
        strokeWidth={1.5}
      />
      {children}
    </g>
  );
}

function CameraGlyph() {
  return (
    <g transform="translate(0 -37)">
      <path d="M-6 -7H-3L-1 -10H6L8 -7H11V9H-12V-3H-6Z" fill="#666b6c" />
      <circle cx="0.5" cy="1" r="5" fill="#1f3438" />
      <path d="M-14 -8H-7M-10.5 -11.5V-4.500" stroke="#666b6c" strokeWidth="2" />
    </g>
  );
}

function MapArtwork() {
  return (
    <svg viewBox="1884 328 1680 1564" className="block h-full w-full" style={{ fontFamily: "Roboto, sans-serif" }}>
      <rect x="1884" y="328" width="1680" height="1564" fill="#5c5c5c" />
      <defs>
        <clipPath id="clip-a"><rect x="1884" y="328" width="836" height="777" /></clipPath>
        <clipPath id="clip-b"><rect x="2720" y="328" width="844" height="777" /></clipPath>
        <clipPath id="clip-c"><rect x="1884" y="1105" width="836" height="787" /></clipPath>
        <clipPath id="clip-d"><rect x="2720" y="1105" width="844" height="787" /></clipPath>
      </defs>
      {tileIds.map((t) => (
        <g key={t} clipPath={`url(#clip-${t})`}>
          <g transform={tileTransform(t)} fill="none" strokeLinejoin="round" strokeLinecap="round">
            {areas[t].map(([color, d], i) => (
              <path key={i} d={d} fill={color} />
            ))}
            {rivers[t].map(([w, d], i) => (
              <path key={i} d={d} stroke={WATER} strokeWidth={w} vectorEffect="non-scaling-stroke" />
            ))}
            <path d={rails[t]} stroke="#56575b" strokeWidth={4} vectorEffect="non-scaling-stroke" />
            <path d={lanes[t]} stroke="#656565" strokeWidth={2} vectorEffect="non-scaling-stroke" />
            <path d={minor[t]} stroke="#545454" strokeWidth={5} vectorEffect="non-scaling-stroke" />
            <path d={minor[t]} stroke="#676767" strokeWidth={3.6} vectorEffect="non-scaling-stroke" />
            <path d={major[t]} stroke="#525252" strokeWidth={12} vectorEffect="non-scaling-stroke" />
            <path d={major[t]} stroke="#686868" strokeWidth={10} vectorEffect="non-scaling-stroke" />
            {t === "a" && (
              <>
                <path d="M20 200L225 165L500 110L890 34" stroke="#5c4d28" strokeWidth={11} vectorEffect="non-scaling-stroke" />
                <path d="M20 200L225 165L500 110L890 34" stroke="#7a6c38" strokeWidth={7} vectorEffect="non-scaling-stroke" />
              </>
            )}
            {t === "c" && (
              <path d="M1180 175L1210 220L1270 280L1265 340M1285 280Q1290 330 1370 380M1440 290L1480 290L1540 275L1568 240" stroke={SHOP} strokeWidth={2.500} vectorEffect="non-scaling-stroke" />
            )}
            {t === "d" && (
              <path d={trails} stroke="#33472f" strokeWidth={2} strokeDasharray="7 5" vectorEffect="non-scaling-stroke" />
            )}
          </g>
        </g>
      ))}

      <Label t="a" x={887} y={46} w={171} size={28} kind="park">Playing Fields</Label>
      <Label t="b" x={1272} y={39} w={132} size={28} kind="park">Leith Links</Label>
      <Label t="a" x={307} y={144} w={87} size={25} kind="road" angle={-10}>Ferry Rd</Label>
      <Label t="a" x={40} y={252} w={15} size={26}>L</Label>
      <Label t="a" x={198} y={268} w={258} size={28} kind="uni">Edinburgh Accies CC</Label>
      <Label t="a" x={980} y={268} w={170}>WARRISTON</Label>
      <text x={1870 + 638 * 0.54847} y={310 + 409 * 0.5102} textLength={177} fontSize={27} fill="#3b3d47" stroke="#626262" strokeWidth={4} paintOrder="stroke" style={{ fontFamily: "'Liberation Sans', sans-serif" }}>
        INBHIR LÍTE
      </text>
      <Label t="a" x={1235} y={422} w={48} size={22} kind="road" angle={60}>B901</Label>
      <Label t="a" x={508} y={665} w={177} size={28} kind="park">Inverleith Park</Label>
      <Label t="a" x={1214} y={741} w={231}>CANONMILLS</Label>
      <Label t="a" x={1455} y={811} w={230}>BONNINGTON</Label>
      <Label t="a" x={540} y={975} w={46} size={22} kind="road" angle={-13}>B900</Label>
      <Label t="a" x={590} y={1075} w={204}>COMELY BANK</Label>
      <Label t="a" x={1415} y={1062} w={95} size={22} kind="road" angle={73}>Dundas St</Label>
      <Label t="a" x={348} y={1251} w={170}>CRAIGLEITH</Label>
      <Label t="a" x={278} y={1343} w={139} size={22} kind="road" angle={-4}>Queensferry Rd</Label>
      <Label t="a" x={638} y={1444} w={175} size={28} kind="park">Dean Gardens</Label>
      <Label t="a" x={1310} y={1328} w={176}>EDINBURGH</Label>
      <Label t="a" x={1323} y={1383} w={189}>NEW TOWN</Label>

      <Label t="b" x={1155} y={115} w={70} size={22} kind="road" angle={38}>Duke St</Label>
      <Label t="b" x={1188} y={300} w={86} size={22} kind="road" angle={-63}>Easter Rd</Label>
      <Label t="b" x={305} y={475} w={50} size={22} kind="road" angle={-50}>B900</Label>
      <Label t="b" x={747} y={540} w={74} size={22} kind="road" angle={57}>Pilrig St</Label>
      <Label t="b" x={1402} y={441} w={110} size={22} kind="road" angle={62}>Lochend Rd</Label>
      <Label t="b" x={600} y={952} w={80} size={22} kind="road" angle={-54}>Elm Row</Label>
      <Label t="b" x={1065} y={1014} w={84} size={22} kind="road" angle={-82}>Easter Rd</Label>
      <Label t="b" x={664} y={1099} w={95} size={22} kind="road" angle={2}>London Rd</Label>
      <Label t="b" x={347} y={1115} w={46} size={22} kind="road" angle={52}>B901</Label>
      <Label t="b" x={974} y={1157} w={190}>ABBEYHILL</Label>
      <Label t="b" x={1441} y={1200} w={24} size={22} kind="road" angle={10}>A1</Label>
      <Label t="b" x={238} y={1245} w={66} size={22} kind="road" angle={-15}>York Pl</Label>
      <Label t="b" x={327} y={1284} w={127} size={28} kind="park">Calton Hill</Label>
      <Label t="b" x={908} y={1348} w={26} size={22} kind="road" angle={-40}>A1</Label>
      <Label t="b" x={1090} y={1473} w={253} size={28} kind="poi">Palace of Holyroodh</Label>

      <Label t="c" x={283} y={66} w={213} size={28} kind="poi">Scottish National</Label>
      <Label t="c" x={283} y={120} w={283} size={28} kind="poi">Gallery of Modern Art...</Label>
      <Label t="c" x={1253} y={98} w={232} size={28} kind="poi">Camera Obscura &amp;</Label>
      <Label t="c" x={1281} y={152} w={215} size={28} kind="poi">World of Illusions</Label>
      <Label t="c" x={853} y={202} w={95} size={22} kind="road" angle={-40}>Melville St</Label>
      <Label t="c" x={982} y={273} w={210} size={28} kind="poi">Edinburgh Castle</Label>
      <Label t="c" x={407} y={337} w={174}>WEST END</Label>
      <Label t="c" x={118} y={553} w={135}>COATES</Label>
      <Label t="c" x={28} y={592} w={42}>RN</Label>
      <Label t="c" x={880} y={511} w={46} size={22} kind="road" angle={1}>B700</Label>
      <Label t="c" x={1164} y={487} w={44} size={22} kind="road" angle={78}>A700</Label>
      <Label t="c" x={1414} y={498} w={88} size={22} kind="road" angle={-20}>West Port</Label>
      <Label t="c" x={471} y={702} w={172} size={28} kind="poi">Fountain Park</Label>
      <Label t="c" x={1290} y={728} w={48} size={22} kind="road" angle={40}>A700</Label>
      <Label t="c" x={502} y={790} w={38} size={22} kind="road" angle={-50}>A70</Label>
      <Label t="c" x={822} y={780} w={153}>LOCHRIN</Label>
      <Label t="c" x={156} y={1019} w={91}>DALRY</Label>
      <Label t="c" x={990} y={1028} w={237}>BRUNTSFIELD</Label>
      <Label t="c" x={183} y={1102} w={86} size={22} kind="road" angle={-18}>Gorgie Rd</Label>
      <Label t="c" x={137} y={1229} w={166}>ARDMILLAN</Label>
      <Label t="c" x={1085} y={1247} w={124} size={22} kind="road" angle={-43}>Bruntsfield Pl</Label>
      <Label t="c" x={431} y={1370} w={189}>MERCHISTON</Label>
      <Label t="c" x={178} y={1480} w={170} size={28} kind="park">Harrison Park</Label>
      <Label t="c" x={754} y={1484} w={244}>HOLY CORNER</Label>
      <Label t="c" x={1025} y={1558} w={184}>GREENHILL</Label>
      <Label t="c" x={26} y={1560} w={158}>SHANDON</Label>
      <Label t="c" x={886} y={1524} w={26} size={22} kind="road" angle={-28}>Rd</Label>
      <Label t="c" x={1423} y={1151} w={224}>MARCHMONT</Label>

      <Label t="d" x={252} y={106} w={128} size={28} kind="poi">Royal Mile</Label>
      <Label t="d" x={992} y={106} w={180} size={28} kind="poi">Dynamic Earth</Label>
      <Label t="d" x={740} y={214} w={110} size={22} kind="road" angle={-24}>Holyrood Rd</Label>
      <Label t="d" x={124} y={278} w={200}>EDINBURGH</Label>
      <Label t="d" x={141} y={331} w={180}>OLD TOWN</Label>
      <Label t="d" x={173} y={452} w={175} size={28} kind="uni">The University</Label>
      <Label t="d" x={188} y={506} w={158} size={28} kind="uni">of Edinburgh</Label>
      <Label t="d" x={1415} y={541} w={76} size={28} kind="park">Holyro</Label>
      <Label t="d" x={523} y={557} w={26} size={22} kind="road" angle={62}>A7</Label>
      <Label t="d" x={870} y={662} w={100} size={22} kind="road" angle={66}>Queen's Dr</Label>
      <Label t="d" x={62} y={914} w={175} size={28} kind="park">The Meadows</Label>
      <Label t="d" x={453} y={899} w={173}>NEWINGTON</Label>
      <Label t="d" x={218} y={1006} w={47} size={22} kind="road" angle={10}>A700</Label>
      <Label t="d" x={1485} y={1034} w={92} size={22} kind="road" angle={8}>Duddingst</Label>
      <Label t="d" x={762} y={1211} w={271} size={28} kind="park">Prestonfield Golf Club</Label>
      <Label t="d" x={516} y={1295} w={93} size={22} kind="road" angle={-15}>Grange Rd</Label>
      <Label t="d" x={234} y={1381} w={105} size={22} kind="road" angle={-15}>Beaufort Rd</Label>
      <Label t="d" x={-10} y={1458} w={121} size={22} kind="road" angle={-15}>Strathearn Rd</Label>
      <Label t="d" x={880} y={1350} w={50} size={22} kind="road" angle={58}>A701</Label>
      <Label t="d" x={1188} y={1378} w={105} size={22} kind="road" angle={52}>Dalkeith Rd</Label>
      <Label t="d" x={148} y={1490} w={44} size={22} kind="road" angle={75}>King's</Label>
      <Label t="d" x={306} y={1502} w={182}>THE GRANGE</Label>
      <Label t="b" x={24} y={1508} w={387} size={55} kind="city">Edinburgh</Label>

      <path d="M616 545H650M616 556H650M625 538L642 545L625 556L642 563" transform={tileTransform("c")} fill="none" stroke="#2c2c2c" strokeWidth={4} />

      <Pin t="a" x={1247} y={54} fill="#26332b" />
      <Pin t="a" x={716} y={300} fill="#36393b"><circle cx="0" cy="-36" r="7.500" fill="#6b6d6e" /></Pin>
      <Pin t="b" x={603} y={1316} fill="#26332b"><path d="M-12 -28L-3 -46L2 -38L5 -42L12 -28Z" fill="#666b67" /><path d="M-2 -33L5 -42L1 -29Z" fill="#26332b" /></Pin>
      <Pin t="b" x={1043} y={1508} fill="#24373b"><CameraGlyph /></Pin>
      <Pin t="d" x={530} y={142} fill="#24373b"><CameraGlyph /></Pin>
      <Pin t="d" x={946} y={142} fill="#24373b"><CameraGlyph /></Pin>
      <Pin t="d" x={60} y={279} fill="#24373b"><CameraGlyph /></Pin>
      <Pin t="c" x={237} y={128} fill="#24373b">
        <path d="M0 -48A11 11 0 1 0 2 -26Q4 -29 2 -32Q4 -36 10 -34Q14 -46 0 -48Z" fill="#666b6c" />
        <g fill="#24373b"><circle cx="-6" cy="-39" r="2" /><circle cx="-1" cy="-43" r="2" /><circle cx="5" cy="-41" r="2" /><circle cx="-6" cy="-33" r="2" /></g>
      </Pin>
      <Pin t="c" x={1412} y={308} fill="#24373b">
        <path d="M-9 -48H-5V-45H-2V-48H2V-45H5V-48H9V-42L6 -39V-32L10 -28V-25H-10V-28L-6 -32V-39L-9 -42Z" fill="#666b6c" />
      </Pin>
      <Pin t="c" x={700} y={828} fill="#24373b">
        <path d="M-8 -46V-38A3 3 0 0 0 -2 -38V-46M-5 -46V-28M6 -28V-46Q2 -44 2 -36H6" stroke="#666b6c" strokeWidth="2" fill="none" />
      </Pin>
      <Pin t="d" x={330} y={633} fill="#33383c">
        <path d="M0 -47L13 -40L0 -33L-13 -40ZM-8 -35L0 -30.500L8 -35V-30L0 -26L-8 -30ZM11 -39H13V-30H11Z" fill="#67696c" />
      </Pin>
      <Pin t="d" x={1298} y={1247} fill="#26332b">
        <path d="M-7 -42V-48H8M-5 -40L3 -43M0 -40L-3 -32L3 -30V-24M-3 -32L-6 -24" stroke="#666b67" strokeWidth="3" fill="none" />
        <circle cx="8" cy="-26" r="2.500" fill="#666b67" />
      </Pin>

      <g style={{ fontFamily: "'Liberation Sans', sans-serif" }} fontSize={30} fill="#ffffff" fillOpacity={0.5}>
        {[472, 984, 1496].map((y) =>
          [1479, 1991, 2503, 3015, 3527].map((x) => (
            <text key={`${x}-${y}`} x={x} y={y} textLength={421}>
              For development purposes only
            </text>
          )),
        )}
      </g>

      <text x={1897} y={1877} textLength={125} fontSize={43} strokeWidth={6} stroke="#bdbdbd" strokeLinejoin="round" paintOrder="stroke" fontWeight={500} style={{ fontFamily: "Lato, sans-serif" }}>
        <tspan fill="#5084ec">G</tspan>
        <tspan fill="#dd5145">o</tspan>
        <tspan fill="#f0b93a">o</tspan>
        <tspan fill="#5084ec">g</tspan>
        <tspan fill="#46a35c">l</tspan>
        <tspan fill="#dd5145">e</tspan>
      </text>
    </svg>
  );
}

function WeatherMap() {
  return (
    <div className="relative mt-[68px] ml-auto h-[1564px] w-[1680px] overflow-hidden">
      <MapArtwork />
      <button className="absolute top-5 right-5 flex h-20 w-20 items-center justify-center rounded bg-white shadow-[0_2px_8px_rgba(0,0,0,0.3)]">
        <svg viewBox="0 0 36 36" className="h-9 w-9" fill="none" stroke="#666666" strokeWidth="4">
          <path d="M2 12V2H12M24 2H34V12M34 24V34H24M12 34H2V24" />
        </svg>
      </button>
      <div className="absolute right-5 bottom-12 flex h-[162px] w-20 flex-col items-center rounded bg-white shadow-[0_2px_8px_rgba(0,0,0,0.3)]">
        <svg viewBox="0 0 36 36" className="my-[22px] h-9 w-9" stroke="#666666" strokeWidth="8">
          <path d="M0 18H36M18 0V36" />
        </svg>
        <div className="h-[2px] w-[60px] bg-[#e6e6e6]" />
        <svg viewBox="0 0 36 36" className="my-[22px] h-9 w-9" stroke="#666666" strokeWidth="8">
          <path d="M0 18H36" />
        </svg>
      </div>
      <div className="absolute right-0 bottom-0 flex h-7 items-center font-[Roboto,sans-serif] text-[20px] leading-7 whitespace-nowrap text-black">
        <span className="w-[196px] bg-[#f5f5f5]/70 pr-[2px] text-center">Keyboard shortcuts</span>
        <span className="ml-[2px] w-[240px] bg-[#f5f5f5]/70 pr-[2px] text-center">Map data ©2021 Google</span>
        <span className="ml-1 w-[140px] bg-[#f5f5f5]/70 pr-[2px] text-center">Terms of Use</span>
        <span className="ml-1 w-[188px] bg-[#f5f5f5]/70 pr-[2px] text-center">Report a map error</span>
      </div>
    </div>
  );
}

function Logo() {
  return (
    <div className="flex h-full items-start">
      <svg viewBox="0 0 120 152" className="mt-[52px] ml-[38px] h-[152px] w-[120px]" fill="none" stroke="#000000">
        <path d="M114.700 23.500A65.700 70.300 0 1 0 114.700 130" strokeWidth="7.500" strokeLinecap="round" />
        <path d="M96.700 45.300A38.700 41.700 0 1 0 96.700 107.700" strokeWidth="7.700" strokeLinecap="round" />
        <path d="M104.700 33.700A52 55.700 0 1 0 104.700 119.700" strokeWidth="1.500" opacity="0.7" />
        <path d="M71.700 10V34M71.700 118V142M10 76.500H32M27 28L43 45M27 125L43 108" strokeWidth="2" />
        <path d="M71.700 16V22M71.700 24V31M71.700 127V133M71.700 135V141M17 76.500H23M25 76.500H31M31 32L35 36M36 38L40 42M31 121L35 117M36 115L40 111" strokeWidth="5" />
      </svg>
      <div className="mt-[66px] ml-[18px] flex h-[114px] w-[121px] items-center justify-center bg-black font-[Lato,sans-serif] text-[114px] leading-none font-semibold text-white">
        <span className="scale-x-102">B</span>
      </div>
      <div className="mt-[66px] ml-5 flex h-[114px] w-[120px] items-center justify-center bg-black font-[Lato,sans-serif] text-[114px] leading-none font-semibold text-white">
        <span className="-ml-[6px] scale-x-112">C</span>
      </div>
      <h1 className="mt-[62px] ml-[21px] font-[Inter,sans-serif] text-[116px] leading-[140px] font-bold tracking-[-2.6px] text-white">Weather</h1>
    </div>
  );
}

function Header() {
  return (
    <header className="flex h-[260px] shrink-0 items-start justify-between border-b border-[#282a3a] bg-[#2f3142]">
      <Logo />
      <div className="mt-[98px] mr-[78px] flex items-start font-['Liberation_Sans',sans-serif]">
        <input
          placeholder="City"
          className="h-[62px] w-[508px] rounded-[20px] bg-white px-[6px] text-[48px] italic placeholder:text-[#2f3142] placeholder:opacity-100"
        />
        <button className="ml-10 h-[60px] w-[200px] rounded-[20px] bg-[#e0885d] text-[36px] text-black">Search</button>
        <button className="ml-5 h-[60px] w-[200px] rounded-[20px] bg-[#e0885d] text-[36px] text-black">Add</button>
      </div>
    </header>
  );
}

interface City {
  name: string;
  temp: number;
  sky: "sunny" | "cloudy";
}

const cities: City[] = [
  { name: "Oslo", temp: 25, sky: "sunny" },
  { name: "Edinburgh", temp: 20, sky: "cloudy" },
  { name: "Glasgow", temp: 23, sky: "cloudy" },
  { name: "London", temp: 28, sky: "sunny" },
];

function CityCard({ name, temp, sky }: City) {
  const Sky = sky === "sunny" ? WiDaySunny : WiDayCloudy;
  return (
    <article className="flex h-[420px] w-[600px] flex-col rounded-[48px] bg-[linear-gradient(60deg,#f0ab86,#f0d074)] pl-[60px] text-white shadow-[10px_20px_20px_rgba(0,0,0,0.48)]">
      <h2 className="mt-[63px] -ml-[1px] font-['DejaVu_Sans_Condensed','DejaVu_Sans',sans-serif] text-[60px] leading-[72px] font-stretch-condensed tracking-[-0.8px] [-webkit-text-stroke:0.8px_white]">{name}</h2>
      <div className="mt-[37px] flex h-[140px] items-start">
        <Sky className="h-[140px] w-[140px]" />
        <WiThermometer className="mt-[24px] ml-[60px] h-[100px] w-[100px]" />
        <p className="mt-[39px] ml-[1px] font-[Inter,sans-serif] text-[31px] leading-9 font-[350] tracking-[-0.1px] whitespace-nowrap">
          Max: {temp} °C
          <br />
          Min: {temp} °C
        </p>
      </div>
      <button className="mt-[26px] mr-10 ml-auto h-[42px] w-[108px] rounded-[20px] border-4 border-t-[#eeaa85] border-r-[#9f7459] border-b-[#9f7459] border-l-[#eeaa85] bg-[#eeaa85] pl-[2px] font-['Liberation_Sans',sans-serif] text-[26.67px] leading-none tracking-[-0.2px]">
        Delete
      </button>
    </article>
  );
}

const gridX = [457, 801, 1145, 1489, 1833];
const gridRows = [
  { label: "22", y: 64 },
  { label: "21", y: 176 },
  { label: "20", y: 289 },
];

function TemperatureChart() {
  return (
    <svg viewBox="0 0 1940 324" className="h-[324px] w-[1940px] shrink-0" fontSize={24} fill="#666666" style={{ fontFamily: "'Liberation Sans', sans-serif" }}>
      <rect x="802" y="20" width="80" height="24" fill="#a6d9d7" />
      <rect x="802" y="20" width="80" height="24" fill="none" stroke="#000000" strokeOpacity="0.1" strokeWidth="8" />
      <text x="895" y="40" textLength="237">Temperature graph °C</text>
      {gridRows.map((r) => (
        <g key={r.label}>
          <path d={`M96 ${r.y}H1834`} stroke="#000000" strokeOpacity="0.1" strokeWidth="2" />
          <text x="91" y={r.y + 8} textAnchor="end">{r.label}</text>
        </g>
      ))}
      <path d="M113 64V324" stroke="#000000" strokeOpacity="0.25" strokeWidth="2" />
      {gridX.map((x) => (
        <path key={x} d={`M${x} 64V324`} stroke="#000000" strokeOpacity="0.1" strokeWidth="2" />
      ))}
      <path d="M250 334L457 64L732 334" fill="none" stroke="#000000" strokeOpacity="0.1" strokeWidth="8" strokeLinejoin="bevel" />
      <circle cx="457" cy="64" r="6" fill="#79c4c2" />
      <circle cx="457" cy="64" r="6" fill="none" stroke="#000000" strokeOpacity="0.1" strokeWidth="8" />
    </svg>
  );
}

function TodayCard() {
  return (
    <article className="ml-[58px] flex h-[324px] w-[1574px] items-start rounded-t-[48px] border-b-2 border-[#74b4e4] bg-[linear-gradient(159deg,#4291e3,#72b4d0)] text-white shadow-[10px_20px_20px_rgba(0,0,0,0.48)]">
      <h2 className="mt-[106px] ml-[280px] w-[752px] font-[Inter,sans-serif] text-[136px] leading-[160px] font-bold tracking-[-5px]">Today</h2>
      <WiThermometer className="mt-[140px] ml-[17px] h-[100px] w-[100px]" />
      <p className="mt-[147px] ml-[1px] font-[Inter,sans-serif] text-[38px] leading-[46px] font-[350] whitespace-nowrap">
        Max: 21 °C
        <br />
        Min: 19 °C
      </p>
    </article>
  );
}

export default function App() {
  return (
    <div className="relative flex h-[2606px] w-full flex-col overflow-hidden bg-white">
      <Header />
      <main className="flex h-[1792px] shrink-0 items-start pr-[66px] pl-[58px]">
        <div className="mt-[60px] grid grid-cols-[600px_600px] gap-[120px]">
          {cities.map((c) => (
            <CityCard key={c.name} {...c} />
          ))}
        </div>
        <WeatherMap />
      </main>
      <div className="mx-[58px] flex h-[110px] shrink-0 items-center justify-center rounded-[28px] bg-[#2f3142] pt-1 font-[Inter,sans-serif] text-[57px] font-[450] tracking-[-0.4px] text-white">
        Edinburgh
      </div>
      <section className="mt-[120px] flex shrink-0 items-start">
        <TemperatureChart />
        <TodayCard />
      </section>
      <svg viewBox="0 0 20 20" className="absolute bottom-0 left-0 h-5 w-5" fill="#000000">
        <path d="M0 0A20 20 0 0 0 20 20H0Z" />
      </svg>
    </div>
  );
}
